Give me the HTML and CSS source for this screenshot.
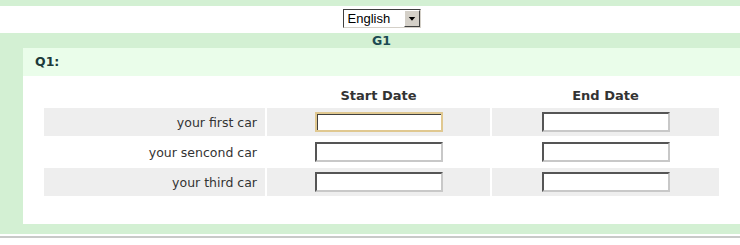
FILE: index.html
```html
<!DOCTYPE html>
<html lang="en">
<head>
    <meta charset="UTF-8">
    <title>Survey</title>
    <link rel="stylesheet" href="styles.css">
</head>
<body>
    <div class="top-band"></div>

    <!-- Language selector -->
    <div class="lang-row">
        <div class="lang-select">
            <select>
                <option>English</option>
            </select>
            <span class="lang-arrow">
                <svg width="15" height="15" viewBox="0 0 15 15">
                    <path d="M4 6h7l-3.5 4z" fill="#000"/>
                </svg>
            </span>
        </div>
    </div>

    <!-- Group G1 -->
    <div class="group-title">G1</div>
    <div class="group-body">
        <div class="question-title">Q1:</div>
        <div class="question-answer">
            <table class="answer-table">
                <tr class="head">
                    <th class="col-label"></th>
                    <th class="col-start">Start Date</th>
                    <th>End Date</th>
                </tr>
                <tr class="odd">
                    <td class="label">your first car</td>
                    <td><input type="text" class="date-input focused"></td>
                    <td><input type="text" class="date-input"></td>
                </tr>
                <tr>
                    <td class="label">your sencond car</td>
                    <td><input type="text" class="date-input"></td>
                    <td><input type="text" class="date-input"></td>
                </tr>
                <tr class="odd">
                    <td class="label">your third car</td>
                    <td><input type="text" class="date-input"></td>
                    <td><input type="text" class="date-input"></td>
                </tr>
            </table>
        </div>
    </div>

    <div class="separator"></div>
</body>
</html>
```

FILE: styles.css
```css
* {
    margin: 0;
    padding: 0;
    box-sizing: border-box;
}

body {
    font-family: "DejaVu Sans", Verdana, sans-serif;
    font-size: 12px;
    color: #333;
    background: #fff;
}

.top-band {
    height: 6px;
    background: #d3f0d3;
}

.lang-row {
    height: 27px;
    display: flex;
    justify-content: center;
    padding: 3px 0 0 23px;
}

.lang-select {
    position: relative;
    width: 78px;
    height: 19px;
}

.lang-select select {
    appearance: none;
    -webkit-appearance: none;
    width: 100%;
    height: 100%;
    border: 1px solid;
    border-color: #404040 #d4d0c8 #d4d0c8 #404040;
    background: #fff;
    font-family: "Liberation Sans", Arial, sans-serif;
    font-size: 13px;
    color: #000;
    padding-left: 4px;
    border-radius: 0;
}

.lang-arrow {
    position: absolute;
    top: 1px;
    right: 1px;
    width: 16px;
    height: 17px;
    background: #d4d0c8;
    border: 1px solid;
    border-color: #fff #404040 #404040 #fff;
    display: flex;
    align-items: center;
    justify-content: center;
    pointer-events: none;
}

.group-title {
    height: 15px;
    background: #d3f0d3;
    padding-left: 23px;
    text-align: center;
    font-weight: bold;
    font-size: 12.5px;
    line-height: 15px;
    color: #1c4a52;
}

.group-body {
    background: #d3f0d3;
    padding: 0 0 10px 23px;
}

.question-title {
    height: 28px;
    background: #eafdea;
    padding-left: 12px;
    font-weight: bold;
    font-size: 12.5px;
    line-height: 27px;
    color: #1c3a3a;
}

.question-answer {
    background: #fff;
    padding: 6px 0 26px;
}

.answer-table {
    width: 679px;
    margin-left: 19px;
    border-spacing: 2px;
    table-layout: fixed;
}

.answer-table th {
    height: 22px;
    font-size: 13px;
    font-weight: bold;
    color: #333;
}

.answer-table th.col-label {
    width: 221px;
}

.answer-table th.col-start {
    width: 223px;
}

.answer-table td {
    height: 28px;
    font-size: 12.5px;
    text-align: center;
}

.answer-table tr.odd td {
    background: #eeeeee;
}

.answer-table td.label {
    text-align: right;
    padding-right: 8px;
}

.date-input {
    display: block;
    margin: 0 auto;
    width: 128px;
    height: 20px;
    border: 2px solid;
    border-color: #555 #c8c8c8 #c8c8c8 #555;
    background: #fff;
    outline: none;
}

.date-input.focused {
    border-color: #e0c890;
    box-shadow: inset 1px 1px 0 #404040;
}

.separator {
    height: 4px;
    margin-top: 2px;
    border-top: 2px solid #c8cac8;
}
```
